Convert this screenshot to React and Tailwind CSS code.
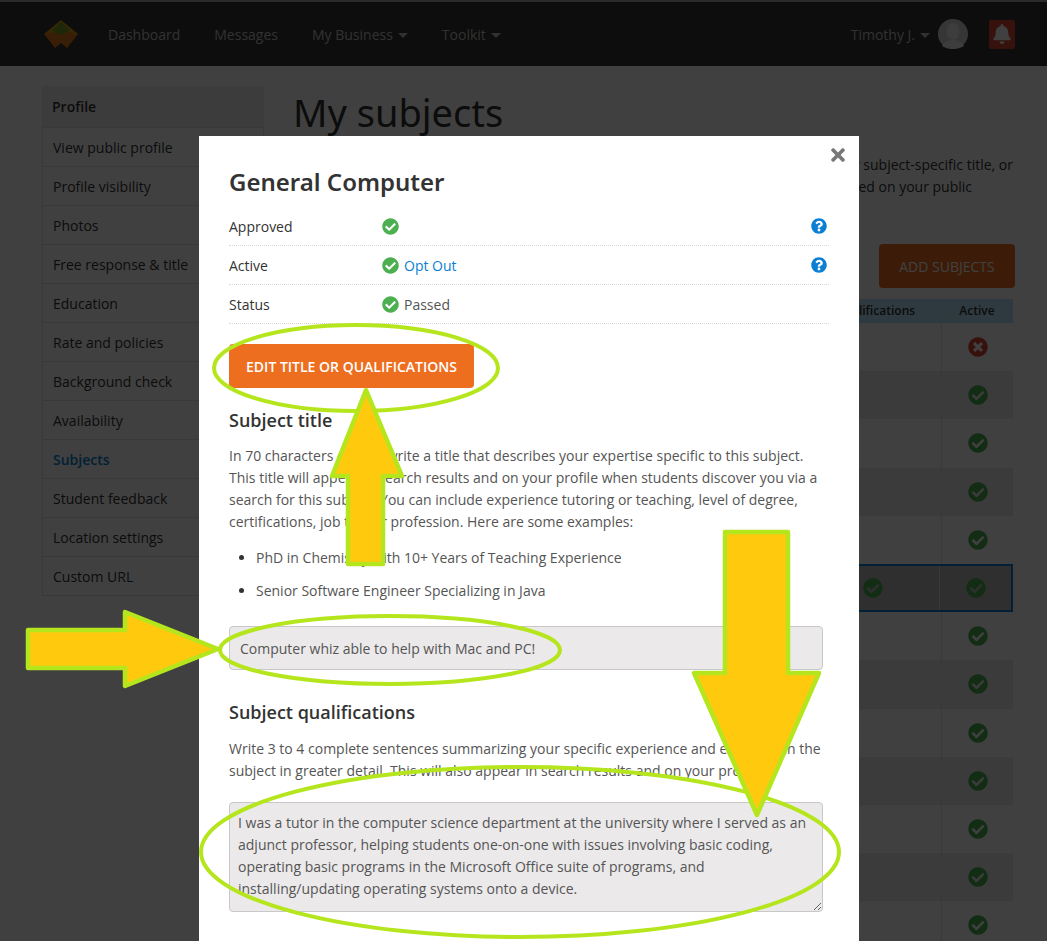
import { FaCheckCircle, FaQuestionCircle, FaTimes, FaTimesCircle, FaBell } from 'react-icons/fa'

const sideLinks = [
  'View public profile',
  'Profile visibility',
  'Photos',
  'Free response & title',
  'Education',
  'Rate and policies',
  'Background check',
  'Availability',
  'Subjects',
  'Student feedback',
  'Location settings',
  'Custom URL',
]

const subjectRows = [
  'ACT Math', 'Algebra', 'C++', 'Calculus', 'Excel', 'General Computer', 'Geometry',
  'Java', 'Linear Algebra', 'Pre-Calculus', 'Python', 'SAT Math', 'Statistics',
]

function Caret() {
  return <span className="ml-[5px] inline-block border-x-[5px] border-t-[5px] border-x-transparent border-t-current align-middle" />
}

function Logo() {
  return (
    <svg width="36" height="30" viewBox="0 0 36 30" className="shrink-0">
      <path d="M18 1 L35 15 L25 22 L18 15 L11 22 L1 15 Z" fill="#d99a10" />
      <path d="M18 3 L27 11 L18 17 L9 11 Z" fill="#7a9a20" />
      <path d="M1 15 L11 13 L18 16 L25 13 L35 15 L24 29 L18 24 L12 29 Z" fill="#e07a18" />
    </svg>
  )
}

function Avatar() {
  return (
    <svg width="30" height="30" viewBox="0 0 30 30" className="ml-[8px] shrink-0">
      <circle cx="15" cy="15" r="15" fill="#d8d8d8" />
      <ellipse cx="15" cy="12.5" rx="6.5" ry="8" fill="#f4f4f4" />
      <path d="M4 27 C7 22 11 21 15 21 C19 21 23 22 26 27 C23 29 19 30 15 30 C11 30 7 29 4 27 Z" fill="#f4f4f4" />
    </svg>
  )
}

function StatusRow({ label, children, help }) {
  return (
    <div className="flex h-[39px] items-center border-b border-dotted border-[#d8d8d8] text-[14px]">
      <div className="w-[153px] text-[#333]">{label}</div>
      <div className="flex flex-1 items-center gap-[5px] text-[#555]">{children}</div>
      {help && <FaQuestionCircle className="mr-[2px] text-[16px] text-[#0a7fd4]" />}
    </div>
  )
}

function Annotations() {
  return (
    <svg width="1047" height="941" className="pointer-events-none absolute left-0 top-0">
      <g fill="none" stroke="#b5e61d" strokeWidth="4">
        <ellipse cx="356" cy="368" rx="142" ry="43" />
        <ellipse cx="390" cy="650" rx="170" ry="34" />
        <ellipse cx="520" cy="852" rx="319" ry="85" />
      </g>
      <g fill="#ffc90e" stroke="#b5e61d" strokeWidth="4.5" strokeLinejoin="round">
        <path d="M366 390 L402 476 L383 476 L383 564 L348 564 L348 476 L332 476 Z" />
        <path d="M28 630 L125 630 L125 612 L218 649 L125 686 L125 668 L28 668 Z" />
        <path d="M725 532 L788 532 L788 673 L819 673 L757 815 L694 673 L725 673 Z" />
      </g>
    </svg>
  )
}

export default function App() {
  const sans = { fontFamily: '"Open Sans", sans-serif' }

  return (
    <div className="relative h-[941px] w-[1047px] overflow-hidden bg-white font-['Open_Sans',sans-serif] text-[14px] text-[#333]" style={sans}>
      {/* Top nav */}
      <nav className="flex h-[66px] items-center border-t-2 border-[#aaa] bg-[#343434] pl-[43px] pr-[32px] text-[#c4c4c4]">
        <Logo />
        <div className="ml-[29px] flex items-center gap-[34px]">
          <span>Dashboard</span>
          <span>Messages</span>
          <span>My Business<Caret /></span>
          <span>Toolkit<Caret /></span>
        </div>
        <div className="ml-auto flex items-center">
          <span>Timothy J.<Caret /></span>
          <Avatar />
          <div className="ml-[21px] flex h-[29px] w-[26px] items-center justify-center rounded-[2px] bg-[#d9442f] text-white">
            <FaBell className="text-[20px]" />
          </div>
        </div>
      </nav>

      {/* Page behind the dialog */}
      <div className="flex gap-[29px] pl-[42px] pt-[20px]">
        <aside className="w-[222px] shrink-0">
          <div className="flex h-[41px] items-center bg-[#f0f0f0] pl-[10px] font-semibold">Profile</div>
          <ul className="border-x border-b border-[#e2e2e2]">
            {sideLinks.map((link) => (
              <li
                key={link}
                className={`flex h-[39px] items-center border-t border-[#e2e2e2] pl-[10px] ${link === 'Subjects' ? 'font-semibold text-[#0a7fd4]' : ''}`}
              >
                {link}
              </li>
            ))}
          </ul>
        </aside>

        <main className="w-[722px] shrink-0">
          <h1 className="text-[38px] leading-[52px] font-['Noto_Sans',sans-serif]">My subjects</h1>
          <div className="mt-[16px] pr-[2px] text-[14px] leading-[22px]">
            <p className="whitespace-nowrap text-right">Choose a subject to review its status and to add a better subject-specific title, or</p>
            <p className="whitespace-nowrap pr-[41px] text-right">update your qualifications, which are then displayed on your public</p>
            <p>profile.</p>
          </div>
          <div className="mt-[24px] flex justify-end">
            <button className="h-[44px] w-[136px] rounded-[4px] bg-[#f06f20] text-white">ADD SUBJECTS</button>
          </div>
          <div className="mt-[11px] w-[720px]">
            <div className="flex h-[24px] items-center bg-[#bde8ff] text-[12px] font-semibold">
              <div className="flex-1 pl-[10px]">Subject</div>
              <div className="w-[132px] text-center">Qualifications</div>
              <div className="w-[72px] text-center">Active</div>
            </div>
            {subjectRows.map((name, i) => {
              const selected = i === 5
              return (
                <div
                  key={name}
                  className={`flex h-[48.2px] items-center ${selected ? 'border-2 border-[#0a7fd4] bg-[#bcbcbc]' : i % 2 === 1 ? 'bg-[#ececec]' : ''}`}
                >
                  <div className="flex-1 pl-[10px]">{name}</div>
                  <div className="flex w-[132px] justify-center">
                    {selected && <FaCheckCircle className="text-[20px] text-[#4caf50]" />}
                  </div>
                  <div className="flex h-full w-[72px] items-center justify-center border-l border-[#e4e4e4]">
                    {i === 0
                      ? <FaTimesCircle className="text-[20px] text-[#d9432f]" />
                      : <FaCheckCircle className="text-[20px] text-[#4caf50]" />}
                  </div>
                </div>
              )
            })}
          </div>
        </main>
      </div>

      {/* Dim layer */}
      <div className="absolute inset-0 bg-black/75" />

      {/* Dialog */}
      <div className="absolute left-[199px] top-[136px] h-[805px] w-[660px] bg-white px-[30px] pt-[30px] text-[#555]">
        <FaTimes className="absolute right-[11px] top-[9px] text-[20px] text-[#777]" />
        <h2 className="font-['Noto_Sans',sans-serif] text-[24px] font-semibold leading-[32px] text-[#333]">General Computer</h2>
        <div className="mt-[9px]">
          <StatusRow label="Approved" help>
            <FaCheckCircle className="ml-[0px] text-[17px] text-[#4caf50]" />
          </StatusRow>
          <StatusRow label="Active" help>
            <FaCheckCircle className="text-[17px] text-[#4caf50]" />
            <span className="text-[#0a7fd4]">Opt Out</span>
          </StatusRow>
          <StatusRow label="Status">
            <FaCheckCircle className="text-[17px] text-[#4caf50]" />
            <span>Passed</span>
          </StatusRow>
        </div>

        <button className="mt-[20px] h-[44px] w-[245px] rounded-[4px] bg-[#ee6e20] text-[14px] font-semibold text-white">
          EDIT TITLE OR QUALIFICATIONS
        </button>

        <h3 className="mt-[19px] text-[18px] font-semibold leading-[26px] text-[#333]">Subject title</h3>
        <p className="mt-[12px] w-[600px] leading-[22px]">
          In 70 characters or less, write a title that describes your expertise specific to this subject. This title will appear in search results and on your profile when students discover you via a search for this subject. You can include experience tutoring or teaching, level of degree, certifications, job title or profession. Here are some examples:
        </p>
        <ul className="mt-[14px] list-disc pl-[27px] leading-[22px] marker:text-[#333]">
          <li>PhD in Chemistry with 10+ Years of Teaching Experience</li>
          <li className="mt-[11px]">Senior Software Engineer Specializing in Java</li>
        </ul>

        <div className="mt-[24px] flex h-[44px] w-[594px] items-center rounded-[4px] border border-[#c8c8c8] bg-[#ebe9ea] pl-[10px]">
          Computer whiz able to help with Mac and PC!
        </div>

        <h3 className="mt-[29px] text-[18px] font-semibold leading-[26px] text-[#333]">Subject qualifications</h3>
        <p className="mt-[13px] w-[600px] leading-[22px]">
          Write 3 to 4 complete sentences summarizing your specific experience and expertise in the subject in greater detail. This will also appear in search results and on your profile.
        </p>

        <textarea
          readOnly
          className="mt-[20px] block h-[110px] w-[594px] rounded-[4px] border border-[#c8c8c8] bg-[#ebe9ea] px-[8px] py-[9px] leading-[22px] text-[#555]"
          defaultValue="I was a tutor in the computer science department at the university where I served as an adjunct professor, helping students one-on-one with issues involving basic coding, operating basic programs in the Microsoft Office suite of programs, and installing/updating operating systems onto a device."
        />
      </div>

      <Annotations />
    </div>
  )
}
